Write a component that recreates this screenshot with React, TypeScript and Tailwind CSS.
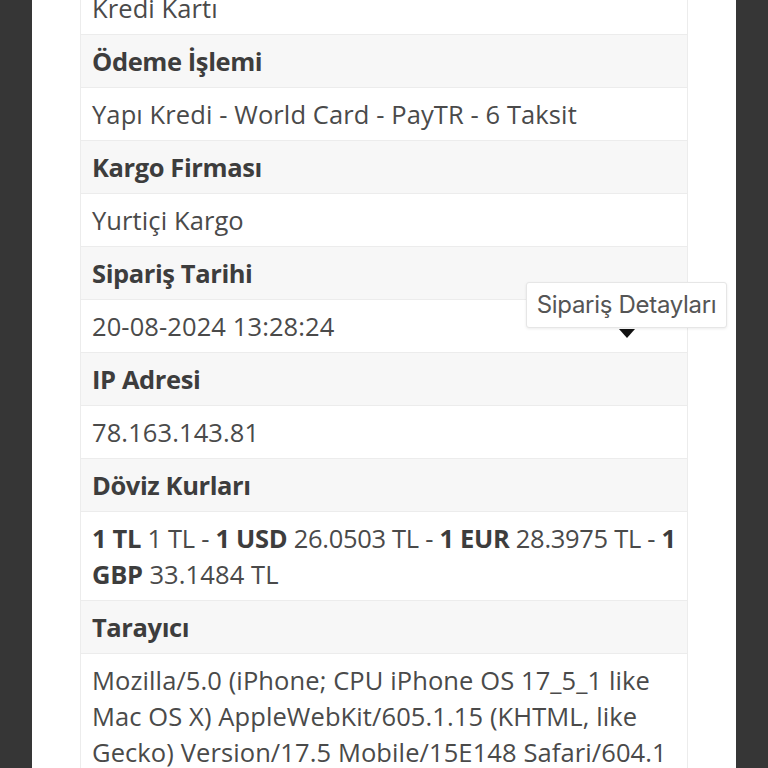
import React from "react";

const font = { fontFamily: "'Open Sans', 'Noto Sans', sans-serif" };

function Head({ children }: { children: React.ReactNode }) {
  return (
    <div className="bg-[#f7f7f7] border-b border-[#ececec] px-[11px] py-[8px] leading-[36px] font-bold tracking-[-0.4px] text-[#3d3d3d]">
      {children}
    </div>
  );
}
function Val({ children }: { children: React.ReactNode }) {
  return (
    <div className="bg-white border-b border-[#ececec] px-[11px] py-[8px] leading-[36px] text-[#4a4a4a]">
      {children}
    </div>
  );
}

export default function App() {
  return (
    <div className="h-[768px] w-[768px] overflow-hidden bg-[#363636] px-[32px]" style={font}>
      <div className="h-full bg-white px-[48px] relative flow-root">
        <div className="-mt-[18px] border-x border-[#ececec] text-[25.5px] tracking-[0.1px]">
          <Val>Kredi Kartı</Val>
          <Head>Ödeme İşlemi</Head>
          <Val>Yapı Kredi - World Card - PayTR - 6 Taksit</Val>
          <Head>Kargo Firması</Head>
          <Val>Yurtiçi Kargo</Val>
          <Head>Sipariş Tarihi</Head>
          <Val>20-08-2024 13:28:24</Val>
          <Head>IP Adresi</Head>
          <Val>78.163.143.81</Val>
          <Head>Döviz Kurları</Head>
          <Val>
            <span className="whitespace-nowrap tracking-[-0.3px]">
              <b className="text-[#3d3d3d]">1 TL</b> 1 TL - <b className="text-[#3d3d3d]">1 USD</b> 26.0503 TL -{" "}
              <b className="text-[#3d3d3d]">1 EUR</b> 28.3975 TL - <b className="text-[#3d3d3d]">1</b>
            </span>
            <br />
            <b className="text-[#3d3d3d] tracking-[-0.3px]">GBP</b> 33.1484 TL
          </Val>
          <Head>Tarayıcı</Head>
          <Val>
            Mozilla/5.0 (iPhone; CPU iPhone OS 17_5_1 like Mac OS X) AppleWebKit/605.1.15 (KHTML, like Gecko)
            Version/17.5 Mobile/15E148 Safari/604.1
          </Val>
        </div>
        <div
          className="absolute left-[494px] top-[282px] w-[201px] h-[46px] bg-white border border-[#e6e6e6] rounded-[3px] shadow-[0_1px_3px_rgba(0,0,0,0.08)] flex items-center justify-center text-[24px] tracking-[-0.3px] text-[#555]"
          style={{ fontFamily: "Inter, 'Liberation Sans', sans-serif" }}
        >
          Sipariş Detayları
          <div className="absolute left-[92px] top-[46px] w-0 h-0 border-x-[8px] border-x-transparent border-t-[9px] border-t-[#111]" />
        </div>
      </div>
    </div>
  );
}
